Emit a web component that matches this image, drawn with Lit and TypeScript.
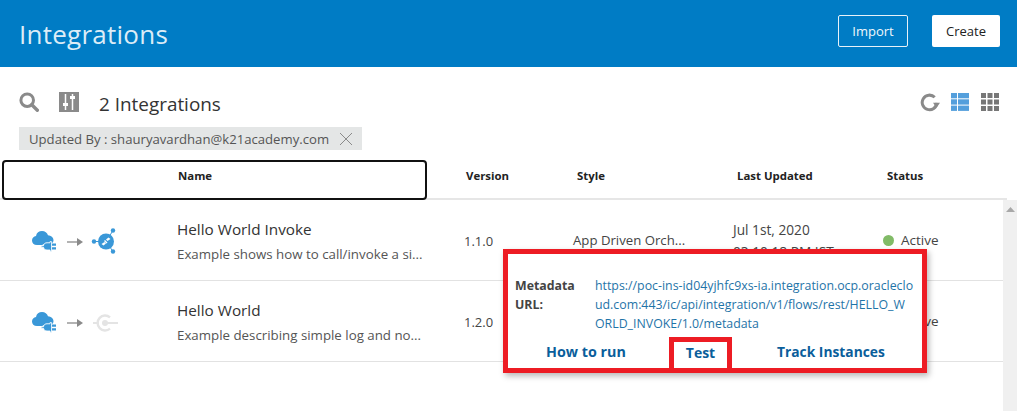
import { LitElement, html, css, svg } from "lit";
import { customElement } from "lit/decorators.js";

const cloud = svg`<path fill="#3a98d8" d="M6 16C2.800 16 1 14 1 11.500 1 9 2.800 7.300 5 7 5.500 3.800 8 2 11 2c3 0 5.200 1.800 6 4.300 3 .2 5.500 2 5.500 5 0 1-.3 1.800-.8 2.500h-7l-3.500 2.200z"/>
<path fill="#3a98d8" stroke="#fff" stroke-width=".8" d="M16 13.800h3v-1.200h1.600v9.600H19V21h-3c-2 0-3.300-1.200-3.500-2.800h-2.300v-1.500h2.300c.2-1.600 1.500-2.900 3.500-2.900z"/>
<path fill="#3a98d8" d="M21 14.500h4v2.200h-4zM21 18.200h4v2.200h-4z"/>`;
const arrow = svg`<path d="M36 13h11" stroke="#8a8a8a" stroke-width="1.300" fill="none"/><path d="M46 9l6 4-6 4z" fill="#8a8a8a"/>`;
const hub = svg`<g fill="#3a98d8"><circle cx="75" cy="12.500" r="8"/><circle cx="63" cy="12.500" r="2.200"/><circle cx="82" cy="1.500" r="2.200"/><circle cx="82" cy="22.500" r="2.200"/><path d="M63 12.500h7M75 12.500L82 1.500M75 12.500L82 22.500" stroke="#3a98d8" stroke-width="1"/></g>
<path fill="#fff" d="M70.500 15l3-2 1.500 1.500-2.500 2zM79.500 10l-3 2-1.500-1.500 2.500-2zM73 12l2.500 2.500 1-1L74 11z"/>`;
const plugOff = svg`<g fill="none" stroke="#e4e4e4"><path d="M62 13h5.500M76 13h11" stroke-width="1.800"/><path d="M79 7.300a7.500 7.500 0 1 0 0 11.400" stroke-width="2.400"/></g><circle cx="74" cy="13" r="3" fill="#e4e4e4"/>`;

@customElement("flow-icon")
class FlowIcon extends LitElement {
  static properties = { off: { type: Boolean } };
  off = false;
  static styles = css`
    :host { display: block; width: 86px; height: 24px; }
    svg { display: block; overflow: visible; }
  `;
  render() {
    return html`<svg width="86" height="24" viewBox="0 0 86 24">${cloud}${arrow}${this.off ? plugOff : hub}</svg>`;
  }
}

@customElement("app-root")
class AppRoot extends LitElement {
  static styles = css`
    :host { display: block; position: relative; width: 1017px; height: 411px; overflow: hidden; background: #fff; color: #333; font-family: "Open Sans", "Noto Sans", sans-serif; font-size: 13px; }
    .banner { height: 67px; background: #007cc5; display: flex; align-items: center; justify-content: space-between; padding: 0 17px 0 19px; box-sizing: border-box; }
    .title { font-size: 26px; color: #dcecf7; font-weight: 400; letter-spacing: .25px; }
    .btns { display: flex; gap: 24px; margin-bottom: 5px; }
    .btn { height: 32px; box-sizing: border-box; display: flex; align-items: center; justify-content: center; border-radius: 2px; font-size: 13px; }
    .import { width: 70px; border: 1px solid #e8f2f9; color: #f0f7fb; }
    .create { width: 68px; background: #fff; color: #222; }
    .toolbar { height: 60px; display: flex; align-items: center; padding: 14px 18px 0 19px; box-sizing: border-box; justify-content: space-between; }
    .left, .right { display: flex; align-items: center; }
    .left svg, .right svg { margin-bottom: 4px; }
    .sliders { margin-left: 20px; }
    .count { font-size: 18.900px; margin-left: 20px; color: #333; }
    .right { gap: 11px; }
    .right .grid { margin-left: 1px; }
    .chip { margin-left: 19px; width: 343px; height: 23px; background: #e4e6e6; display: flex; align-items: center; padding-left: 10px; box-sizing: border-box; font-size: 13.150px; color: #555; gap: 10px; }
    .chip span { white-space: nowrap; }
    .head { display: grid; grid-template-columns: 178px 288px 111px 160px 150px 1fr; width: 1007px; height: 40px; margin-top: 10px; align-items: start; position: relative; border-bottom: 2px solid #e6e6e6; box-sizing: border-box; font-size: 11.400px; font-weight: 700; color: #222; padding-top: 8px; }
    .focus { position: absolute; left: 2px; top: 0; width: 425px; height: 40px; box-sizing: border-box; border: 2px solid #111; border-radius: 4px; }
    .cell-name { grid-column: 2; }
    .body { display: flex; height: 211px; }
    .rows { flex: 1; min-width: 0; }
    .scroll { width: 14px; flex: none; background: #f0f0f0; display: flex; justify-content: center; align-items: flex-start; padding-top: 7px; box-sizing: border-box; }
    .row { display: grid; grid-template-columns: 177px 287px 109px 160px 150px 1fr; height: 81px; border-bottom: 1px solid #e2e2e2; box-sizing: border-box; align-items: center; font-size: 13px; color: #444; }
    .ic { padding-left: 31px; width: 86px; padding-top: 2px; }
    .name { font-size: 15.300px; color: #333; line-height: 20px; margin-bottom: 6px; margin-top: 2px; white-space: nowrap; }
    .desc { font-size: 13.300px; color: #555; white-space: nowrap; }
    .ver { padding-top: 2px; }
    .style { font-size: 13.200px; }
    .date { font-size: 13.700px; line-height: 22px; height: 44px; padding-top: 1px; }
    .status { display: flex; align-items: center; gap: 7px; font-size: 13.500px; }
    .dot { width: 11px; height: 11px; border-radius: 50%; background: #81bb67; }
    .pop { position: absolute; left: 503px; top: 249px; width: 424px; height: 124px; box-sizing: border-box; background: #fff; border: 5px solid #ed1c24; box-shadow: 2px 3px 6px rgba(0,0,0,.28); padding: 22px 7px 0 7px; font-size: 12.350px; }
    .meta { display: flex; line-height: 19px; }
    .lbl { width: 80px; font-weight: 700; color: #444; flex: none; }
    .url { color: #1f74a8; white-space: nowrap; flex: none; }
    .act { position: absolute; top: 88px; white-space: nowrap; font-weight: 700; font-size: 14px; color: #0a5e9b; }
    .howto { left: 38px; font-size: 14.300px; }
    .track { left: 269px; font-size: 13.800px; }
    .test { position: absolute; left: 161px; top: 83px; width: 63px; height: 36px; box-sizing: border-box; border: 5px solid #ed1c24; padding-bottom: 5px; display: flex; align-items: center; justify-content: center; font-weight: 700; font-size: 14px; color: #0a5e9b; }
  `;
  render() {
    return html`
      <div class="banner">
        <div class="title">Integrations</div>
        <div class="btns"><div class="btn import">Import</div><div class="btn create">Create</div></div>
      </div>
      <div class="toolbar">
        <div class="left">
          <svg width="20" height="20" viewBox="0 0 20 20"><circle cx="8.200" cy="8.200" r="6.300" fill="none" stroke="#8a8a8a" stroke-width="3"/><path d="M12.800 12.800l5.500 5.500" stroke="#8a8a8a" stroke-width="3.400" stroke-linecap="round"/></svg>
          <svg class="sliders" width="20" height="20" viewBox="0 0 20 20"><rect width="20" height="20" fill="#8a8a8a"/><path d="M6.500 2v16M13.500 2v16" stroke="#fff" stroke-width="1.500"/><rect x="4" y="11" width="5" height="3" fill="#fff"/><rect x="11" y="4" width="5" height="3" fill="#fff"/></svg>
          <div class="count">2 Integrations</div>
        </div>
        <div class="right">
          <svg width="20" height="20" viewBox="0 0 20 20"><path d="M14.700 5.300a7.300 7.300 0 1 0 2.100 5.500" fill="none" stroke="#8a8a8a" stroke-width="3"/><path d="M20 10.800h-7l3.500 5z" fill="#8a8a8a"/></svg>
          <svg width="18" height="18" viewBox="0 0 18 18" fill="#549fdc"><rect width="6" height="5.300"/><rect x="7" width="11" height="5.300"/><rect y="6.300" width="6" height="5.300"/><rect x="7" y="6.300" width="11" height="5.300"/><rect y="12.600" width="6" height="5.300"/><rect x="7" y="12.600" width="11" height="5.300"/></svg>
          <svg class="grid" width="18" height="18" viewBox="0 0 18 18" fill="#777"><rect width="5" height="5"/><rect x="6.500" width="5" height="5"/><rect x="13" width="5" height="5"/><rect y="6.500" width="5" height="5"/><rect x="6.500" y="6.500" width="5" height="5"/><rect x="13" y="6.500" width="5" height="5"/><rect y="13" width="5" height="5"/><rect x="6.500" y="13" width="5" height="5"/><rect x="13" y="13" width="5" height="5"/></svg>
        </div>
      </div>
      <div class="chip"><span>Updated By : shauryavardhan@k21academy.com</span>
        <svg width="14" height="14" viewBox="0 0 14 14"><path d="M1 1l12 12M13 1L1 13" stroke="#8a8a8a" stroke-width="1"/></svg></div>
      <div class="head">
        <div class="focus"></div>
        <div class="cell-name">Name</div><div>Version</div><div>Style</div><div>Last Updated</div><div>Status</div>
      </div>
      <div class="body">
        <div class="rows">
          <div class="row">
            <div class="ic"><flow-icon></flow-icon></div>
            <div><div class="name">Hello World Invoke</div><div class="desc">Example shows how to call/invoke a si...</div></div>
            <div class="ver">1.1.0</div><div class="style">App Driven Orch...</div>
            <div class="date"><div>Jul 1st, 2020</div><div>03:10:18 PM IST</div></div>
            <div class="status"><span class="dot"></span>Active</div>
          </div>
          <div class="row">
            <div class="ic"><flow-icon off></flow-icon></div>
            <div><div class="name">Hello World</div><div class="desc">Example describing simple log and no...</div></div>
            <div class="ver">1.2.0</div><div></div><div></div>
            <div class="status"><span class="dot"></span>Active</div>
          </div>
        </div>
        <div class="scroll"><svg width="9" height="5" viewBox="0 0 9 5"><path d="M0 5L4.500 0 9 5z" fill="#a8a8a8"/></svg></div>
      </div>
      <div class="pop">
        <div class="meta"><div class="lbl">Metadata URL:</div><div class="url">https://poc-ins-id04yjhfc9xs-ia.integration.ocp.oracleclo<br>ud.com:443/ic/api/integration/v1/flows/rest/HELLO_W<br>ORLD_INVOKE/1.0/metadata</div></div>
        <div class="act howto">How to run</div>
        <div class="test">Test</div>
        <div class="act track">Track Instances</div>
      </div>
    `;
  }
}
